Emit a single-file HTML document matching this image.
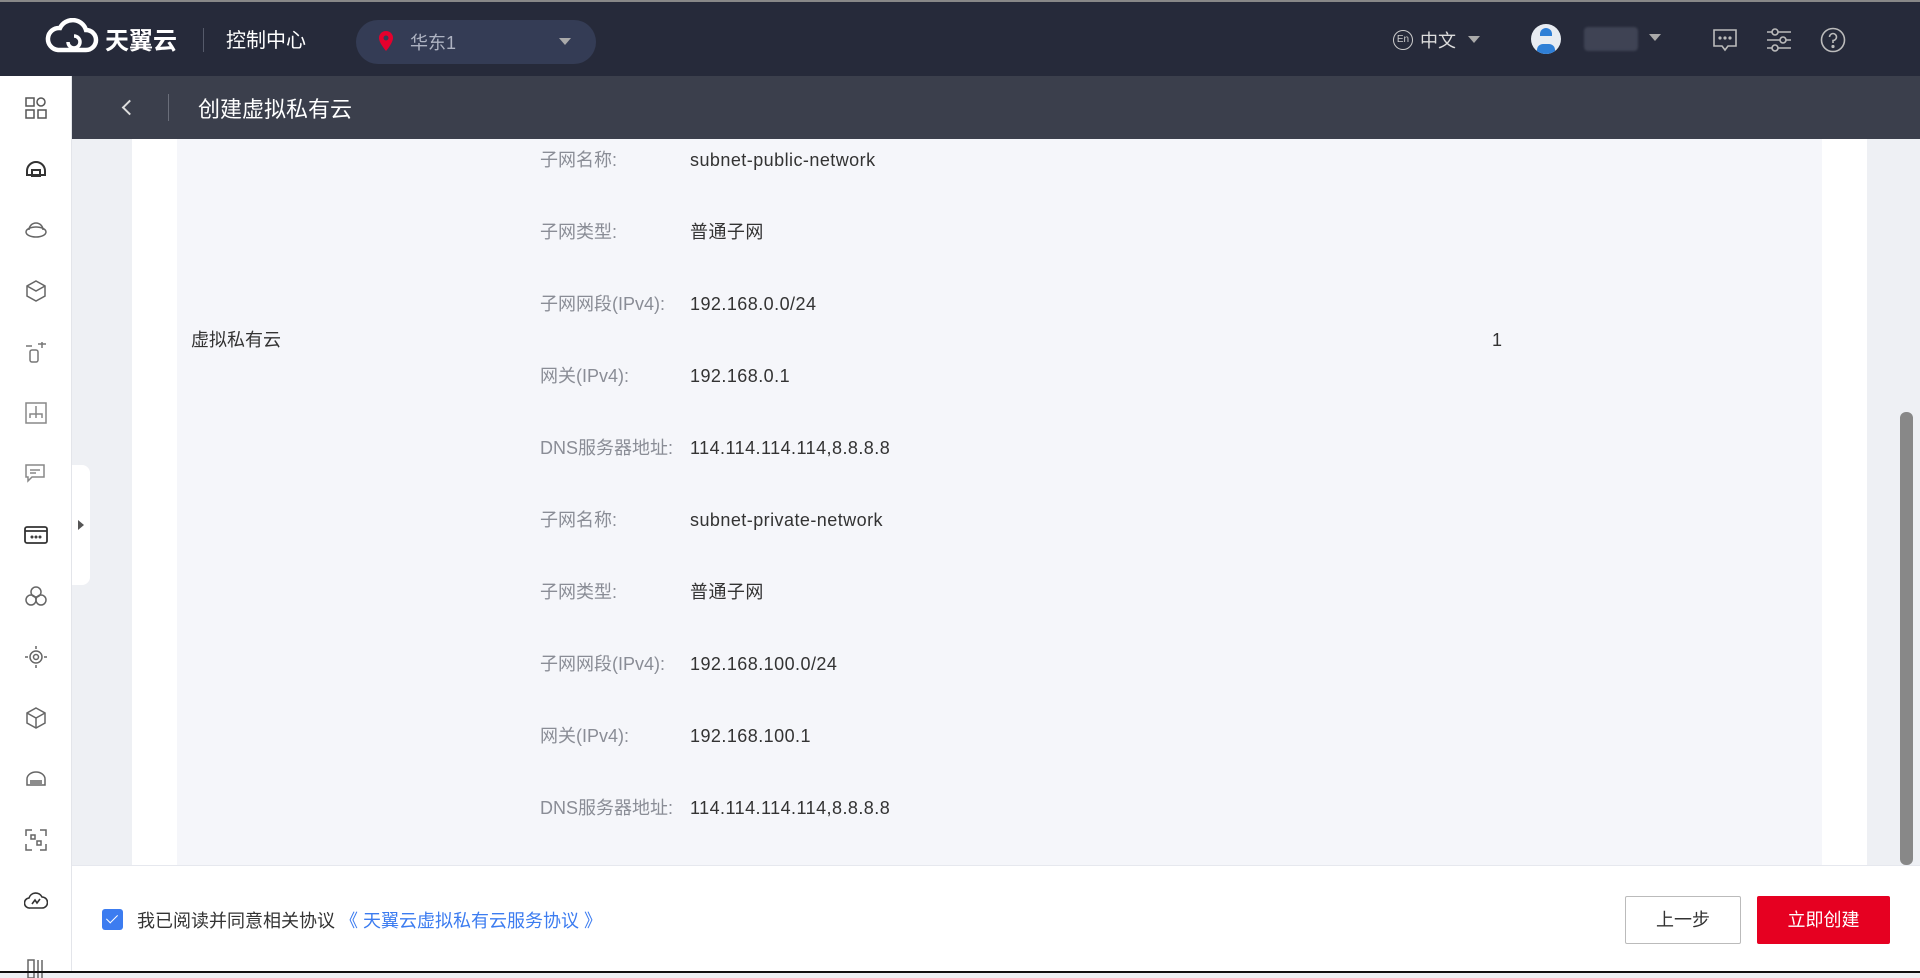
<!DOCTYPE html>
<html><head><meta charset="utf-8"><style>
*{margin:0;padding:0;box-sizing:border-box}
body{width:1920px;height:973px;overflow:hidden;position:relative;background:#eef0f4;font-family:"Liberation Sans","Noto Sans CJK SC",sans-serif;color:#333}
.abs{position:absolute}
#hdr{left:0;top:0;width:1920px;height:76px;background:#262a3a;border-top:2px solid #888}
#sub{left:72px;top:76px;width:1848px;height:63px;background:#3b3f4c}
#side{left:0;top:76px;width:72px;height:897px;background:#fff;border-right:1px solid #e3e5ea}
.ic{position:absolute;left:24px;width:24px;height:24px}
.row{position:absolute;font-size:18px;line-height:24px}
.lab{left:540px;color:#8a8d96}
.val{left:690px;color:#333;letter-spacing:0.45px}
</style></head><body>
<div id="hdr" class="abs">
 <svg class="abs" style="left:44px;top:16px" width="56" height="38" viewBox="0 0 56 38"><path d="M14 32 H42 A10 10 0 0 0 42 12 A14 14 0 0 0 16 10 A11 11 0 0 0 14 32Z" fill="none" stroke="#fff" stroke-width="4.5"/><path d="M24 24 A6 6 0 1 0 30 18" fill="none" stroke="#fff" stroke-width="3.5"/></svg>
 <div class="abs" style="left:105px;top:19px;color:#fff;font-size:24px;font-weight:bold">天翼云</div>
 <div class="abs" style="left:203px;top:26px;width:1px;height:24px;background:#555a6a"></div>
 <div class="abs" style="left:226px;top:22px;color:#fff;font-size:20px">控制中心</div>
 <div class="abs" style="left:356px;top:18px;width:240px;height:44px;border-radius:22px;background:#343c55"></div>
 <svg class="abs" style="left:379px;top:29px" width="14" height="20" viewBox="0 0 14 20"><path d="M7 0A7 7 0 0 0 0 7C0 12 7 20 7 20S14 12 14 7A7 7 0 0 0 7 0Z" fill="#e5002d"/><circle cx="7" cy="7" r="2.5" fill="#343c55"/></svg>
 <div class="abs" style="left:410px;top:27px;color:#aeb3c2;font-size:18px">华东1</div>
 <div class="abs" style="left:559px;top:36px;border:6px solid transparent;border-top:7px solid #aaa"></div>
 <div class="abs" style="left:1393px;top:28px;width:20px;height:20px;border:1.5px solid #ccc;border-radius:50%;color:#ccc;font-size:10px;line-height:17px;text-align:center">En</div>
 <div class="abs" style="left:1420px;top:25px;color:#ddd;font-size:18px">中文</div>
 <div class="abs" style="left:1468px;top:34px;border:6px solid transparent;border-top:7px solid #aaa"></div>
 <div class="abs" style="left:1531px;top:22px;width:30px;height:30px;border-radius:50%;background:#e8ecf2;overflow:hidden"><div style="position:absolute;left:6px;top:20px;width:18px;height:12px;background:#2f7fd6;border-radius:6px 6px 0 0"></div><div style="position:absolute;left:9px;top:4px;width:12px;height:8px;background:#2f7fd6;border-radius:6px 6px 0 0"></div></div>
 <div class="abs" style="left:1584px;top:25px;width:54px;height:24px;background:#3f4354;border-radius:4px;filter:blur(1px)"></div>
 <div class="abs" style="left:1649px;top:32px;border:6px solid transparent;border-top:7px solid #aaa"></div>
 <svg class="abs" style="left:1712px;top:25px" width="26" height="26" viewBox="0 0 26 26" fill="none" stroke="#bbb" stroke-width="1.6"><path d="M2 3H24V19H16L13 23L10 19H2Z"/><circle cx="8" cy="11" r=".8" fill="#bbb"/><circle cx="13" cy="11" r=".8" fill="#bbb"/><circle cx="18" cy="11" r=".8" fill="#bbb"/></svg>
 <svg class="abs" style="left:1766px;top:25px" width="26" height="26" viewBox="0 0 26 26" fill="none" stroke="#bbb" stroke-width="1.6"><path d="M1 5H25M1 13H25M1 21H25"/><circle cx="9" cy="5" r="3" fill="#262a3a"/><circle cx="17" cy="13" r="3" fill="#262a3a"/><circle cx="9" cy="21" r="3" fill="#262a3a"/></svg>
 <svg class="abs" style="left:1820px;top:25px" width="26" height="26" viewBox="0 0 26 26" fill="none" stroke="#bbb" stroke-width="1.6"><circle cx="13" cy="13" r="11.5"/><path d="M9.5 10A3.5 3.5 0 1 1 13 13.5V16"/><circle cx="13" cy="19.5" r=".8" fill="#bbb"/></svg>
</div>
<div id="sub" class="abs">
 <div class="abs" style="left:52px;top:26px;width:11px;height:11px;border-left:2px solid #ddd;border-bottom:2px solid #ddd;transform:rotate(45deg)"></div>
 <div class="abs" style="left:96px;top:18px;width:1px;height:27px;background:#6a6e7a"></div>
 <div class="abs" style="left:126px;top:16px;color:#fff;font-size:22px">创建虚拟私有云</div>
</div>
<div id="side" class="abs">
 <svg class="ic" style="top:20px" viewBox="0 0 24 24" fill="none" stroke="#555" stroke-width="1.5"><rect x="2" y="2" width="8" height="8"/><circle cx="17" cy="6" r="4"/><rect x="2" y="14" width="8" height="8"/><rect x="14" y="14" width="8" height="8"/></svg>
 <svg class="ic" style="top:81px" viewBox="0 0 24 24" fill="none" stroke="#333" stroke-width="2"><path d="M3 14A9 9 0 0 1 21 14V18H3Z"/><rect x="8" y="13" width="8" height="6"/></svg>
 <svg class="ic" style="top:142px" viewBox="0 0 24 24" fill="none" stroke="#666" stroke-width="1.5"><ellipse cx="12" cy="14" rx="10" ry="5"/><path d="M5 12A7 7 0 0 1 19 12"/></svg>
 <svg class="ic" style="top:203px" viewBox="0 0 24 24" fill="none" stroke="#666" stroke-width="1.5"><path d="M12 2L21 7V17L12 22L3 17V7Z"/><path d="M3 7L12 12L21 7"/></svg>
 <svg class="ic" style="top:264px" viewBox="0 0 24 24" fill="none" stroke="#777" stroke-width="1.5"><rect x="6" y="10" width="8" height="12" rx="2"/><path d="M2 6H8M14 4H22M18 2V8"/></svg>
 <svg class="ic" style="top:325px" viewBox="0 0 24 24" fill="none" stroke="#888" stroke-width="1.5"><rect x="2" y="2" width="20" height="20"/><path d="M12 5V11M6 17V13H18V17M12 11V17"/></svg>
 <svg class="ic" style="top:386px" viewBox="0 0 24 24" fill="none" stroke="#888" stroke-width="1.5"><path d="M2 3H20V15H8L4 19V15H2Z"/><path d="M6 8H16M6 11H12"/></svg>
 <svg class="ic" style="top:447px" viewBox="0 0 24 24" fill="none" stroke="#333" stroke-width="1.8"><rect x="1" y="4" width="22" height="16" rx="2"/><path d="M1 8H23"/><circle cx="8" cy="14" r=".6"/><circle cx="12" cy="14" r=".6"/><circle cx="16" cy="14" r=".6"/></svg>
 <svg class="ic" style="top:508px" viewBox="0 0 24 24" fill="none" stroke="#666" stroke-width="1.5"><circle cx="12" cy="8" r="5"/><circle cx="7" cy="16" r="5"/><circle cx="17" cy="16" r="5"/></svg>
 <svg class="ic" style="top:569px" viewBox="0 0 24 24" fill="none" stroke="#666" stroke-width="1.5"><circle cx="12" cy="12" r="6"/><circle cx="12" cy="12" r="2.5"/><path d="M12 1V4M12 20V23M1 12H4M20 12H23"/></svg>
 <svg class="ic" style="top:630px" viewBox="0 0 24 24" fill="none" stroke="#666" stroke-width="1.5"><path d="M12 2L21 7V17L12 22L3 17V7Z"/><path d="M3 7L12 12L21 7M12 12V22"/></svg>
 <svg class="ic" style="top:691px" viewBox="0 0 24 24" fill="none" stroke="#666" stroke-width="1.5"><path d="M3 12A9 7 0 0 1 21 12V18H3Z"/><path d="M6 14H18M6 16H18"/></svg>
 <svg class="ic" style="top:752px" viewBox="0 0 24 24" fill="none" stroke="#666" stroke-width="1.5"><path d="M2 8V2H8M16 2H22V8M22 16V22H16M8 22H2V16"/><rect x="7" y="7" width="4" height="4"/><rect x="13" y="13" width="4" height="4"/></svg>
 <svg class="ic" style="top:813px" viewBox="0 0 24 24" fill="none" stroke="#333" stroke-width="1.6"><path d="M6 19A5 5 0 0 1 5 9A7 7 0 0 1 18 8A5.5 5.5 0 0 1 18 19Z"/><path d="M8 15L11 11L13 14L16 10"/></svg>
 <svg class="ic" style="top:878px" viewBox="0 0 24 24" fill="none" stroke="#666" stroke-width="1.5"><rect x="4" y="6" width="6" height="18"/><path d="M14 6V24M18 6V24"/></svg>
</div>
<div class="abs" style="left:72px;top:465px;width:18px;height:120px;background:#fff;border-radius:0 8px 8px 0"><div style="position:absolute;left:6px;top:55px;border:5px solid transparent;border-left:6px solid #555"></div></div>
<div class="abs" style="left:132px;top:139px;width:1735px;height:726px;background:#fff"></div>
<div class="abs" style="left:177px;top:139px;width:1645px;height:726px;background:#f5f6fa"></div>
<div class="abs" style="left:1900px;top:412px;width:13px;height:453px;background:#888;border-radius:6px"></div>
<div class="row" style="left:191px;top:328px;color:#333">虚拟私有云</div>
<div class="row" style="left:1492px;top:328px">1</div>
<div class="row lab" style="top:148px">子网名称:</div><div class="row val" style="top:148px">subnet-public-network</div>
<div class="row lab" style="top:220px">子网类型:</div><div class="row val" style="top:220px">普通子网</div>
<div class="row lab" style="top:292px">子网网段(IPv4):</div><div class="row val" style="top:292px">192.168.0.0/24</div>
<div class="row lab" style="top:364px">网关(IPv4):</div><div class="row val" style="top:364px">192.168.0.1</div>
<div class="row lab" style="top:436px">DNS服务器地址:</div><div class="row val" style="top:436px">114.114.114.114,8.8.8.8</div>
<div class="row lab" style="top:508px">子网名称:</div><div class="row val" style="top:508px">subnet-private-network</div>
<div class="row lab" style="top:580px">子网类型:</div><div class="row val" style="top:580px">普通子网</div>
<div class="row lab" style="top:652px">子网网段(IPv4):</div><div class="row val" style="top:652px">192.168.100.0/24</div>
<div class="row lab" style="top:724px">网关(IPv4):</div><div class="row val" style="top:724px">192.168.100.1</div>
<div class="row lab" style="top:796px">DNS服务器地址:</div><div class="row val" style="top:796px">114.114.114.114,8.8.8.8</div>
<div class="abs" style="left:72px;top:865px;width:1848px;height:106px;background:#fff;border-top:1px solid #e6e8ee">
 <div class="abs" style="left:30px;top:43px;width:21px;height:21px;background:#3c7cf0;border-radius:3px"><div style="position:absolute;left:7px;top:3px;width:6px;height:11px;border-right:1.5px solid #fff;border-bottom:1.5px solid #fff;transform:rotate(45deg)"></div></div>
 <div class="abs" style="left:65px;top:41px;font-size:18px;color:#333">我已阅读并同意相关协议 <span style="color:#3c7cf0">《 天翼云虚拟私有云服务协议 》</span></div>
 <div class="abs" style="left:1553px;top:30px;width:116px;height:48px;border:1px solid #bbb;border-radius:2px;font-size:18px;line-height:46px;text-align:center;color:#333">上一步</div>
 <div class="abs" style="left:1685px;top:30px;width:133px;height:48px;background:#e60021;border-radius:2px;font-size:18px;line-height:48px;text-align:center;color:#fff">立即创建</div>
</div>
<div class="abs" style="left:0;top:971px;width:1920px;height:2px;background:#111"></div>
</body></html>
